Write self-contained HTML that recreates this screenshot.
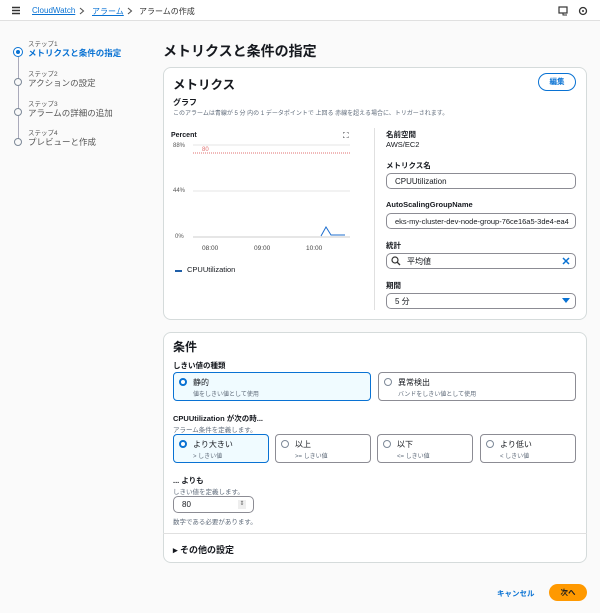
<!DOCTYPE html>
<html><head><meta charset="utf-8">
<style>
*{box-sizing:border-box;margin:0;padding:0}
body{width:600px;height:613px;background:#fafafa;font-family:"Liberation Sans","Noto Sans CJK JP",sans-serif;color:#16191f;position:relative;overflow:hidden}
.a{position:absolute;white-space:nowrap}
.card{position:absolute;background:#fff;border:1px solid #d5dbdb;border-radius:8px}
.lbl{font-size:8px;font-weight:bold}
.sm{font-size:6.5px;color:#5f6b7a}
.inp{position:absolute;border:1px solid #8c8c94;border-radius:5px;background:#fff;font-size:8px;padding-left:8px;display:flex;align-items:center}
.rb{position:absolute;border:1px solid #8c8c94;border-radius:4px;background:#fff}
.rb.on{border:1.5px solid #0972d3;background:#f0fbff}
.rb .c{position:absolute;left:5px;top:5px;width:8px;height:8px;border-radius:50%;border:1px solid #7d8998;background:#fff}
.rb.on .c{border:2.5px solid #0972d3}
.rb .t{position:absolute;left:19px;top:4px;font-size:8px}
.rb .d{position:absolute;left:19px;top:16px;font-size:6px;color:#5f6b7a}
</style></head><body>
<div class="a" style="left:0;top:0;width:600px;height:21px;background:#fff;border-bottom:1px solid #e0e0e0"></div>
<svg class="a" style="left:11px;top:6px" width="10" height="9"><path d="M1 1.5H9M1 4.5H9M1 7.5H9" stroke="#333" stroke-width="1.4"/></svg>
<div class="a" style="left:32px;top:6px;font-size:8px;color:#0972d3;text-decoration:underline">CloudWatch</div>
<svg class="a" style="left:79px;top:7px" width="6" height="8"><path d="M1 1L4.5 4L1 7" fill="none" stroke="#555" stroke-width="1.1"/></svg>
<div class="a" style="left:92px;top:6px;font-size:8px;color:#0972d3;text-decoration:underline">アラーム</div>
<svg class="a" style="left:127px;top:7px" width="6" height="8"><path d="M1 1L4.5 4L1 7" fill="none" stroke="#555" stroke-width="1.1"/></svg>
<div class="a" style="left:139px;top:6px;font-size:8px;color:#333">アラームの作成</div>
<svg class="a" style="left:558px;top:6px" width="40" height="10"><rect x="1" y="1" width="8" height="6" fill="none" stroke="#333" stroke-width="1.2"/><path d="M5 7v2h4" stroke="#333" fill="none"/><circle cx="25" cy="5" r="3.5" fill="none" stroke="#333" stroke-width="1.3"/><circle cx="25" cy="5" r="1" fill="#333"/></svg>

<div class="a" style="left:18px;top:57px;width:1px;height:85px;background:#aab"></div>
<div class="a" style="left:13px;top:47px;width:10px;height:10px;border-radius:50%;border:1.5px solid #0972d3;background:#fff"></div>
<div class="a" style="left:16px;top:50px;width:4px;height:4px;border-radius:50%;background:#0972d3"></div>
<div class="a" style="left:14px;top:78px;width:8px;height:8px;border-radius:50%;border:1px solid #7d8998;background:#fafafa"></div>
<div class="a" style="left:14px;top:108px;width:8px;height:8px;border-radius:50%;border:1px solid #7d8998;background:#fafafa"></div>
<div class="a" style="left:14px;top:138px;width:8px;height:8px;border-radius:50%;border:1px solid #7d8998;background:#fafafa"></div>
<div class="a" style="left:28px;top:38px;font-size:6.5px;color:#555">ステップ1</div>
<div class="a" style="left:28px;top:47px;font-size:8.5px;font-weight:bold;color:#0972d3">メトリクスと条件の指定</div>
<div class="a" style="left:28px;top:68px;font-size:6.5px;color:#555">ステップ2</div>
<div class="a" style="left:28px;top:77px;font-size:8.5px;color:#555">アクションの設定</div>
<div class="a" style="left:28px;top:98px;font-size:6.5px;color:#555">ステップ3</div>
<div class="a" style="left:28px;top:107px;font-size:8.5px;color:#555">アラームの詳細の追加</div>
<div class="a" style="left:28px;top:127px;font-size:6.5px;color:#555">ステップ4</div>
<div class="a" style="left:28px;top:136px;font-size:8.5px;color:#555">プレビューと作成</div>

<div class="a" style="left:163px;top:41px;font-size:14px;font-weight:bold">メトリクスと条件の指定</div>

<div class="card" style="left:163px;top:67px;width:424px;height:253px"></div>
<div class="a" style="left:173px;top:74px;font-size:12.5px;font-weight:bold">メトリクス</div>
<div class="a" style="left:538px;top:73px;width:38px;height:18px;border:1.5px solid #0972d3;border-radius:10px;font-size:7.5px;font-weight:bold;color:#0972d3;text-align:center;line-height:15px">編集</div>
<div class="a lbl" style="left:173px;top:97px">グラフ</div>
<div class="a sm" style="left:173px;top:108px;font-size:6px">このアラームは青線が 5 分 内の 1 データポイントで 上回る 赤線を超える場合に、トリガーされます。</div>

<div class="a" style="left:171px;top:132px;font-size:7px;font-weight:bold">Percent</div>
<div class="a" style="left:343px;top:131px;font-size:8px">⛶</div>
<div class="a" style="left:173px;top:143px;font-size:6px;color:#555">88%</div>
<div class="a" style="left:173px;top:188px;font-size:6px;color:#555">44%</div>
<div class="a" style="left:175px;top:234px;font-size:6px;color:#555">0%</div>
<svg class="a" style="left:190px;top:140px" width="165" height="100">
<line x1="3" y1="5" x2="160" y2="5" stroke="#e5e5e5"/>
<line x1="3" y1="51" x2="160" y2="51" stroke="#e5e5e5"/>
<line x1="3" y1="97" x2="160" y2="97" stroke="#ccc"/>
<line x1="3" y1="13" x2="160" y2="13" stroke="#e07070" stroke-dasharray="1,1"/>
<text x="12" y="11" font-size="6" fill="#e07070" font-family="Liberation Sans">80</text>
<polyline points="131,96 136,87 141,95 155,95" fill="none" stroke="#1f6fcf" stroke-width="1"/>
</svg>
<div class="a" style="left:202px;top:245px;font-size:6.5px;color:#444">08:00</div>
<div class="a" style="left:254px;top:245px;font-size:6.5px;color:#444">09:00</div>
<div class="a" style="left:306px;top:245px;font-size:6.5px;color:#444">10:00</div>
<div class="a" style="left:175px;top:270px;width:7px;height:2px;background:#1f5fa8"></div>
<div class="a" style="left:187px;top:265px;font-size:7.5px">CPUUtilization</div>

<div class="a" style="left:374px;top:128px;width:1px;height:182px;background:#e0e0e0"></div>
<div class="a lbl" style="left:386px;top:129px;font-size:7.5px">名前空間</div>
<div class="a" style="left:386px;top:140px;font-size:7.5px">AWS/EC2</div>
<div class="a lbl" style="left:386px;top:160px;font-size:7.5px">メトリクス名</div>
<div class="inp" style="left:386px;top:173px;width:190px;height:16px">CPUUtilization</div>
<div class="a lbl" style="left:386px;top:200px;font-size:7.5px">AutoScalingGroupName</div>
<div class="inp" style="left:386px;top:213px;width:190px;height:16px;font-size:7.5px">eks-my-cluster-dev-node-group-76ce16a5-3de4-ea4</div>
<div class="a lbl" style="left:386px;top:240px;font-size:7.5px">統計</div>
<div class="inp" style="left:386px;top:253px;width:190px;height:16px;padding-left:20px">平均値</div>
<svg class="a" style="left:391px;top:256px" width="10" height="10"><circle cx="4" cy="4" r="3" fill="none" stroke="#333" stroke-width="1.2"/><line x1="6" y1="6" x2="9" y2="9" stroke="#333" stroke-width="1.3"/></svg>
<svg class="a" style="left:562px;top:257px" width="8" height="8"><path d="M1 1L7 7M7 1L1 7" stroke="#0972d3" stroke-width="1.5"/></svg>
<div class="a lbl" style="left:386px;top:280px;font-size:7.5px">期間</div>
<div class="inp" style="left:386px;top:293px;width:190px;height:16px">5 分</div>
<svg class="a" style="left:562px;top:298px" width="8" height="6"><path d="M0 0H8L4 5Z" fill="#0972d3"/></svg>

<div class="card" style="left:163px;top:332px;width:424px;height:231px"></div>
<div class="a" style="left:173px;top:338px;font-size:12px;font-weight:bold">条件</div>
<div class="a lbl" style="left:173px;top:360px;font-size:7.5px">しきい値の種類</div>
<div class="rb on" style="left:173px;top:372px;width:198px;height:29px"><div class="c"></div><div class="t">静的</div><div class="d">値をしきい値として使用</div></div>
<div class="rb" style="left:378px;top:372px;width:198px;height:29px"><div class="c"></div><div class="t">異常検出</div><div class="d">バンドをしきい値として使用</div></div>
<div class="a lbl" style="left:173px;top:413px;font-size:7.5px">CPUUtilization が次の時...</div>
<div class="a sm" style="left:173px;top:424px">アラーム条件を定義します。</div>
<div class="rb on" style="left:173px;top:434px;width:96px;height:29px"><div class="c"></div><div class="t">より大きい</div><div class="d">&gt; しきい値</div></div>
<div class="rb" style="left:275px;top:434px;width:96px;height:29px"><div class="c"></div><div class="t">以上</div><div class="d">&gt;= しきい値</div></div>
<div class="rb" style="left:377px;top:434px;width:96px;height:29px"><div class="c"></div><div class="t">以下</div><div class="d">&lt;= しきい値</div></div>
<div class="rb" style="left:480px;top:434px;width:96px;height:29px"><div class="c"></div><div class="t">より低い</div><div class="d">&lt; しきい値</div></div>
<div class="a lbl" style="left:173px;top:475px;font-size:7.5px">... よりも</div>
<div class="a sm" style="left:173px;top:486px">しきい値を定義します。</div>
<div class="inp" style="left:173px;top:496px;width:81px;height:17px">80</div>
<div class="a" style="left:238px;top:500px;width:8px;height:9px;background:#eee;font-size:6px;color:#666;text-align:center;line-height:9px">⇕</div>
<div class="a sm" style="left:173px;top:516px">数字である必要があります。</div>
<div class="a" style="left:163px;top:533px;width:424px;height:1px;background:#e0e0e0"></div>
<div class="a" style="left:173px;top:543px;font-size:9px;font-weight:bold">▸ その他の設定</div>

<div class="a" style="left:497px;top:588px;font-size:7.5px;font-weight:bold;color:#0972d3">キャンセル</div>
<div class="a" style="left:549px;top:584px;width:38px;height:17px;border-radius:9px;background:#ff9900;font-size:7.5px;font-weight:bold;text-align:center;line-height:17px">次へ</div>
</body></html>
